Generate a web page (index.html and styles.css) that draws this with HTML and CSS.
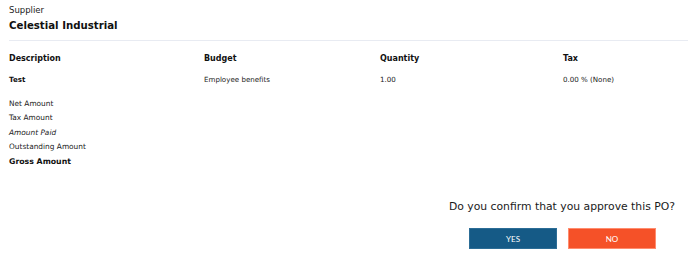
FILE: index.html
```html
<!DOCTYPE html>
<html lang="en">
<head>
  <meta charset="UTF-8" />
  <title>Approve PO</title>
  <link rel="stylesheet" href="styles.css">
</head>
<body>
  <div class="po">
    <div class="supplier">
      <div class="label">Supplier</div>
      <div class="name">Celestial Industrial</div>
    </div>

    <div class="lines">
      <div class="row head">
        <div>Description</div>
        <div>Budget</div>
        <div>Quantity</div>
        <div>Tax</div>
      </div>
      <div class="row item">
        <div class="desc">Test</div>
        <div>Employee benefits</div>
        <div>1.00</div>
        <div>0.00 % (None)</div>
      </div>
    </div>

    <div class="totals">
      <div>Net Amount</div>
      <div>Tax Amount</div>
      <div class="paid">Amount Paid</div>
      <div>Outstanding Amount</div>
      <div class="gross">Gross Amount</div>
    </div>

    <div class="confirm">
      <p>Do you confirm that you approve this PO?</p>
      <div class="buttons">
        <button class="yes">YES</button>
        <button class="no">NO</button>
      </div>
    </div>
  </div>
</body>
</html>
```

FILE: styles.css
```css
body {
  margin: 0;
  font-family: 'DejaVu Sans', sans-serif;
  color: #111;
  background: white;
}
.po {
  padding: 4px 0 0 9px;
}
.supplier .label {
  font-size: 8.5px;
  color: #222;
  line-height: 13px;
}
.supplier .name {
  font-size: 10.2px;
  font-weight: bold;
  line-height: 17px;
}
.lines {
  margin-top: 6px;
  border-top: 1px solid #e8ebf2;
  padding-top: 11px;
}
.row {
  display: grid;
  grid-template-columns: 195px 176px 183px 1fr;
}
.head {
  font-size: 8px;
  font-weight: bold;
  line-height: 14px;
}
.item {
  margin-top: 7px;
  font-size: 7.1px;
  line-height: 14px;
  color: #222;
}
.item .desc {
  font-weight: bold;
  color: #111;
}
.totals {
  margin-top: 10px;
  font-size: 7.4px;
  color: #222;
}
.totals div {
  line-height: 14.4px;
}
.totals .paid {
  font-style: italic;
}
.totals .gross {
  font-size: 7.8px;
  font-weight: bold;
  color: #111;
}
.confirm {
  display: flex;
  flex-direction: column;
  align-items: flex-end;
  padding-right: 13px;
  margin-top: 30px;
}
.confirm p {
  margin: 0;
  font-size: 10.8px;
  line-height: 16px;
  color: #1a1a1a;
}
.buttons {
  display: flex;
  gap: 11px;
  margin-top: 13px;
  padding-right: 19px;
}
button {
  width: 88px;
  height: 21px;
  border: 1px solid transparent;
  color: white;
  font-family: 'Lato', sans-serif;
  font-size: 8px;
  padding: 0;
}
.yes {
  background: #155a86;
  border-color: #2c6d96;
}
.no {
  background: #f55128;
  border-color: #ff8c6e;
}
```
